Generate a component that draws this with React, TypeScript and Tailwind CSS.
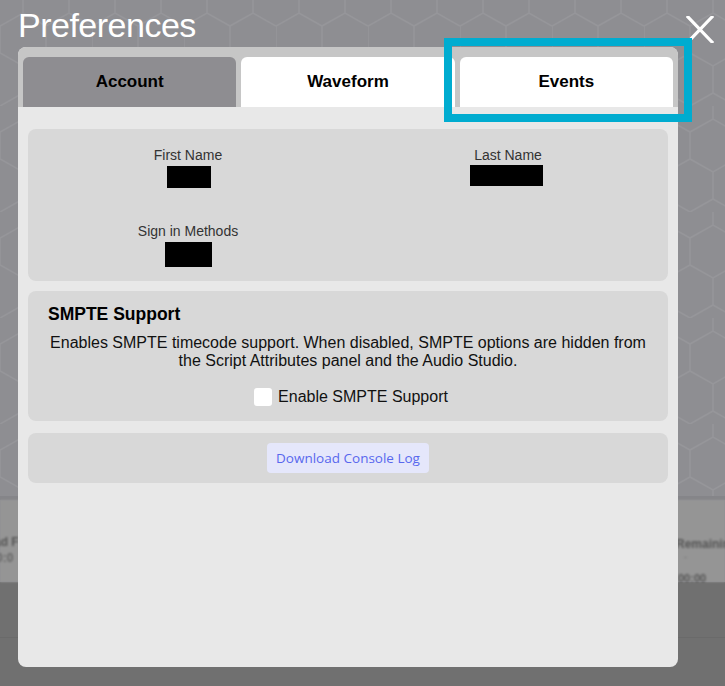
import React from "react";

const sans = { fontFamily: '"Liberation Sans", Arial, sans-serif' };

function HexBackground() {
  return (
    <svg className="absolute inset-0 w-full h-full" xmlns="http://www.w3.org/2000/svg">
      <defs>
        <pattern id="hex" width="92" height="106" patternUnits="userSpaceOnUse">
          <path
            d="M0 26 L23 13 L46 26 L46 53 L23 66 L0 53 Z M46 26 L69 13 L92 26 M46 53 L69 66 L92 53 M23 66 L23 93 L46 106 M23 93 L0 106 M69 66 L69 93 L46 106 M69 93 L92 106 M23 0 L23 13 M69 0 L69 13"
            fill="none"
            stroke="#96969a"
            strokeWidth="1.5"
          />
        </pattern>
      </defs>
      <rect width="100%" height="100%" fill="url(#hex)" />
    </svg>
  );
}

export default function App() {
  return (
    <div className="relative w-[725px] h-[686px] overflow-hidden bg-[#8e8e92]" style={sans}>
      {/* dimmed app behind */}
      <div className="absolute inset-0 flex flex-col">
        <div className="relative h-[496px] bg-[#8e8e92] overflow-hidden">
          <HexBackground />
        </div>
        <div className="h-[4px] bg-[#858589]" />
        <div className="relative h-[82px] bg-[#959595] blur-[1px]">
          <div className="absolute left-[-6px] top-[33px] text-[12px] font-bold text-[#555]">ad F</div>
          <div className="absolute left-[-4px] top-[49px] text-[12px] font-bold text-[#666]">0:0</div>
          <div className="absolute left-[676px] top-[35px] text-[12px] font-bold text-[#555]">Remaining</div>
          <div className="absolute left-[684px] top-[51px] text-[9px] text-[#6a6a6a]">-</div>
          <div className="absolute left-[678px] top-[70px] text-[11px] font-bold text-[#555]">00:00</div>
        </div>
        <div className="flex-1 bg-[#707070] flex flex-col">
          <div className="h-[55px]" />
          <div className="h-px bg-[#6a6a6a]" />
        </div>
      </div>

      {/* title */}
      <div className="absolute left-[18px] top-[4px] text-[34px] leading-[42px] text-white tracking-[-0.5px]">
        Preferences
      </div>

      {/* close */}
      <svg className="absolute left-[686px] top-[16px]" width="28" height="27" viewBox="0 0 28 27">
        <path d="M2 1 L26 26 M26 1 L2 26" stroke="white" strokeWidth="3.2" strokeLinecap="square" />
      </svg>

      {/* modal */}
      <div className="absolute left-[18px] top-[47px] w-[660px] h-[620px] rounded-[8px] bg-[#e8e8e8] overflow-hidden flex flex-col">
        <div className="bg-[#c6c6c6] flex gap-[5px] px-[5px] pt-[10px]">
          <div className="flex-1 h-[50px] rounded-t-[6px] bg-[#8e8d91] flex items-center justify-center text-[17px] font-bold text-black">
            Account
          </div>
          <div className="flex-1 h-[50px] rounded-t-[6px] bg-white flex items-center justify-center text-[17px] font-bold text-black">
            Waveform
          </div>
          <div className="flex-1 h-[50px] rounded-t-[6px] bg-white flex items-center justify-center text-[17px] font-bold text-black">
            Events
          </div>
        </div>

        <div className="flex flex-col px-[10px] pt-[22px]">
          {/* account card */}
          <div className="rounded-[8px] bg-[#d8d8d8] h-[152px] grid grid-cols-2 content-start pt-[18px] text-[14px] text-[#333]">
            <div className="flex flex-col items-center">
              <div className="leading-[16px]">First Name</div>
              <div className="mt-[3px] ml-[2px] w-[44px] h-[22px] bg-black" />
            </div>
            <div className="flex flex-col items-center">
              <div className="leading-[16px]">Last Name</div>
              <div className="mt-[2px] mr-[3px] w-[73px] h-[21px] bg-black" />
            </div>
            <div className="flex flex-col items-center mt-[35px]">
              <div className="leading-[16px]">Sign in Methods</div>
              <div className="mt-[3px] w-[47px] h-[25px] bg-black" />
            </div>
          </div>

          {/* SMPTE card */}
          <div className="mt-[10px] rounded-[8px] bg-[#d8d8d8] h-[130px] px-[20px] pt-[13px] text-black">
            <div className="text-[17.5px] font-bold leading-[20px]">SMPTE Support</div>
            <div className="mt-[10px] text-[16px] leading-[18px] text-center text-[#111]">
              Enables SMPTE timecode support. When disabled, SMPTE options are hidden from the Script Attributes panel and
              the Audio Studio.
            </div>
            <div className="mt-[18px] ml-[6px] flex items-center justify-center gap-[6px]">
              <div className="w-[18px] h-[18px] rounded-[3px] bg-white" />
              <span className="text-[16px] leading-[18px] text-[#111]">Enable SMPTE Support</span>
            </div>
          </div>

          {/* console log card */}
          <div className="mt-[12px] rounded-[8px] bg-[#d8d8d8] h-[50px] flex items-center justify-center">
            <div
              className="h-[30px] px-[9px] rounded-[4px] bg-[#e5e7fb] text-[#5868ee] text-[13.5px] font-medium flex items-center"
              style={{ fontFamily: '"Open Sans", "Noto Sans", sans-serif' }}
            >
              Download Console Log
            </div>
          </div>
        </div>
      </div>

      {/* highlight annotation */}
      <div className="absolute left-[444px] top-[38px] w-[248px] h-[84px] border-[8px] border-[#00acd0]" />
    </div>
  );
}
